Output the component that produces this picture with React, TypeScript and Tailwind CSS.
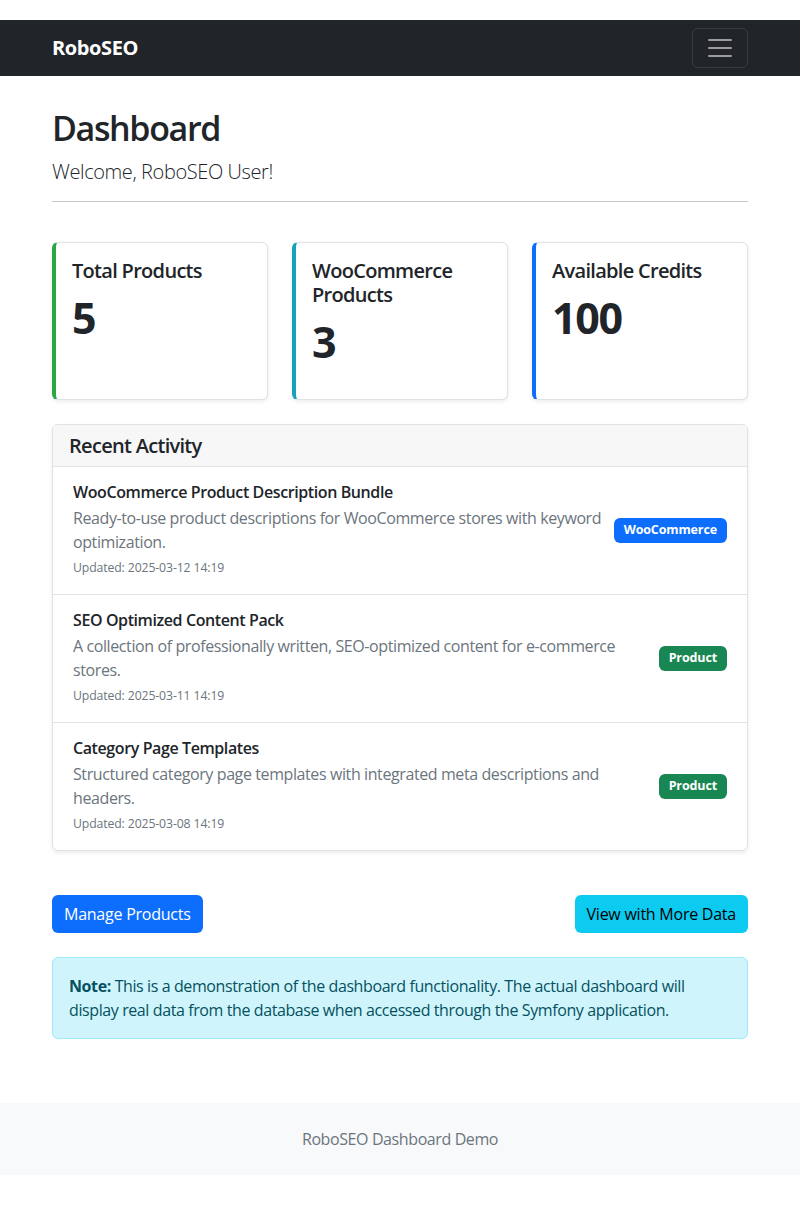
import React from "react";

const font = { fontFamily: '"Open Sans", "Noto Sans", "Liberation Sans", sans-serif' };

const items = [
  {
    title: "WooCommerce Product Description Bundle",
    desc: "Ready-to-use product descriptions for WooCommerce stores with keyword optimization.",
    date: "2025-03-12 14:19",
    badge: "WooCommerce",
    badgeClass: "bg-[#0d6efd]",
  },
  {
    title: "SEO Optimized Content Pack",
    desc: "A collection of professionally written, SEO-optimized content for e-commerce stores.",
    date: "2025-03-11 14:19",
    badge: "Product",
    badgeClass: "bg-[#198754]",
  },
  {
    title: "Category Page Templates",
    desc: "Structured category page templates with integrated meta descriptions and headers.",
    date: "2025-03-08 14:19",
    badge: "Product",
    badgeClass: "bg-[#198754]",
  },
];

function StatCard({ title, value, color }: { title: string; value: string; color: string }) {
  return (
    <div
      className={`rounded-[6px] border border-[#dee2e6] border-l-4 bg-white shadow-[0_2px_4px_rgba(0,0,0,0.075)] ${color}`}
    >
      <div className="px-4 pt-4 pb-[14px]">
        <h5 className="mb-2 text-[20px] font-semibold leading-[1.2] tracking-[-0.035em] text-[#212529]">{title}</h5>
        <p className="mb-4 text-[43px] font-bold leading-[54px] tracking-[-0.03em] text-[#212529]">{value}</p>
      </div>
    </div>
  );
}

export default function App() {
  return (
    <div style={font} className="bg-white pt-5 pb-10 text-[16px] leading-[1.5] tracking-[-0.025em] text-[#212529]">
      <nav className="h-14 bg-[#212529]">
        <div className="mx-auto flex h-14 w-[696px] items-center justify-between">
          <span className="text-[20px] font-bold tracking-[-0.02em] text-white">RoboSEO</span>
          <button className="flex h-10 w-14 items-center justify-center rounded-[6px] border border-white/10">
            <svg width="30" height="30" viewBox="0 0 30 30">
              <path
                stroke="rgba(255,255,255,0.55)"
                strokeLinecap="round"
                strokeMiterlimit="10"
                strokeWidth="2"
                d="M4 7h22M4 15h22M4 23h22"
              />
            </svg>
          </button>
        </div>
      </nav>

      <main className="mx-auto w-[696px] pt-8">
        <h1 className="mb-2 text-[34px] font-semibold leading-[1.2] tracking-[-0.04em]">Dashboard</h1>
        <p className="text-[20px] font-light">Welcome, RoboSEO User!</p>
        <hr className="mt-[14px] mb-4 border-t border-[#212529]/25" />

        <div className="mt-10 grid grid-cols-3 gap-6">
          <StatCard title="Total Products" value="5" color="border-l-[#28a745]" />
          <StatCard title="WooCommerce Products" value="3" color="border-l-[#17a2b8]" />
          <StatCard title="Available Credits" value="100" color="border-l-[#0d6efd]" />
        </div>

        <div className="mt-6 overflow-hidden rounded-[6px] border border-[#dee2e6] bg-white shadow-[0_2px_4px_rgba(0,0,0,0.075)]">
          <div className="border-b border-[#dee2e6] bg-[#f7f7f8] px-4 py-2">
            <h5 className="text-[20px] font-semibold leading-[25px] tracking-[-0.035em]">Recent Activity</h5>
          </div>
          {items.map((it, i) => (
            <div
              key={i}
              className={`flex items-center justify-between px-5 py-4 ${i < items.length - 1 ? "border-b border-[#dee2e6]" : ""}`}
            >
              <div className="pr-2">
                <h6 className="mb-1 text-[16px] font-semibold leading-[1.2]">{it.title}</h6>
                <p className="mb-1 text-[#6c757d]">{it.desc}</p>
                <small className="block text-[12.25px] leading-[20px] tracking-[-0.01em] text-[#6c757d]">Updated: {it.date}</small>
              </div>
              <span
                className={`flex h-[25px] shrink-0 items-center rounded-[6px] px-[10px] text-[12.5px] font-bold tracking-[-0.01em] text-white ${it.badgeClass}`}
              >
                {it.badge}
              </span>
            </div>
          ))}
        </div>

        <div className="mt-[44px] flex justify-between">
          <button className="h-[38px] rounded-[6px] bg-[#0d6efd] px-3 tracking-[-0.015em] text-white">Manage Products</button>
          <button className="h-[38px] rounded-[6px] bg-[#0dcaf0] px-3 tracking-[-0.015em] text-black">View with More Data</button>
        </div>

        <div className="mt-6 rounded-[6px] border border-[#9eeaf9] bg-[#cff4fc] p-4 text-[#055160]">
          <p>
            <strong className="font-bold">Note:</strong> This is a demonstration of the dashboard functionality. The
            actual dashboard will display real data from the database when accessed through the Symfony application.
          </p>
        </div>
      </main>

      <footer className="mt-16 bg-[#f8f9fa] py-6 text-center text-[#6c757d]">RoboSEO Dashboard Demo</footer>
    </div>
  );
}
